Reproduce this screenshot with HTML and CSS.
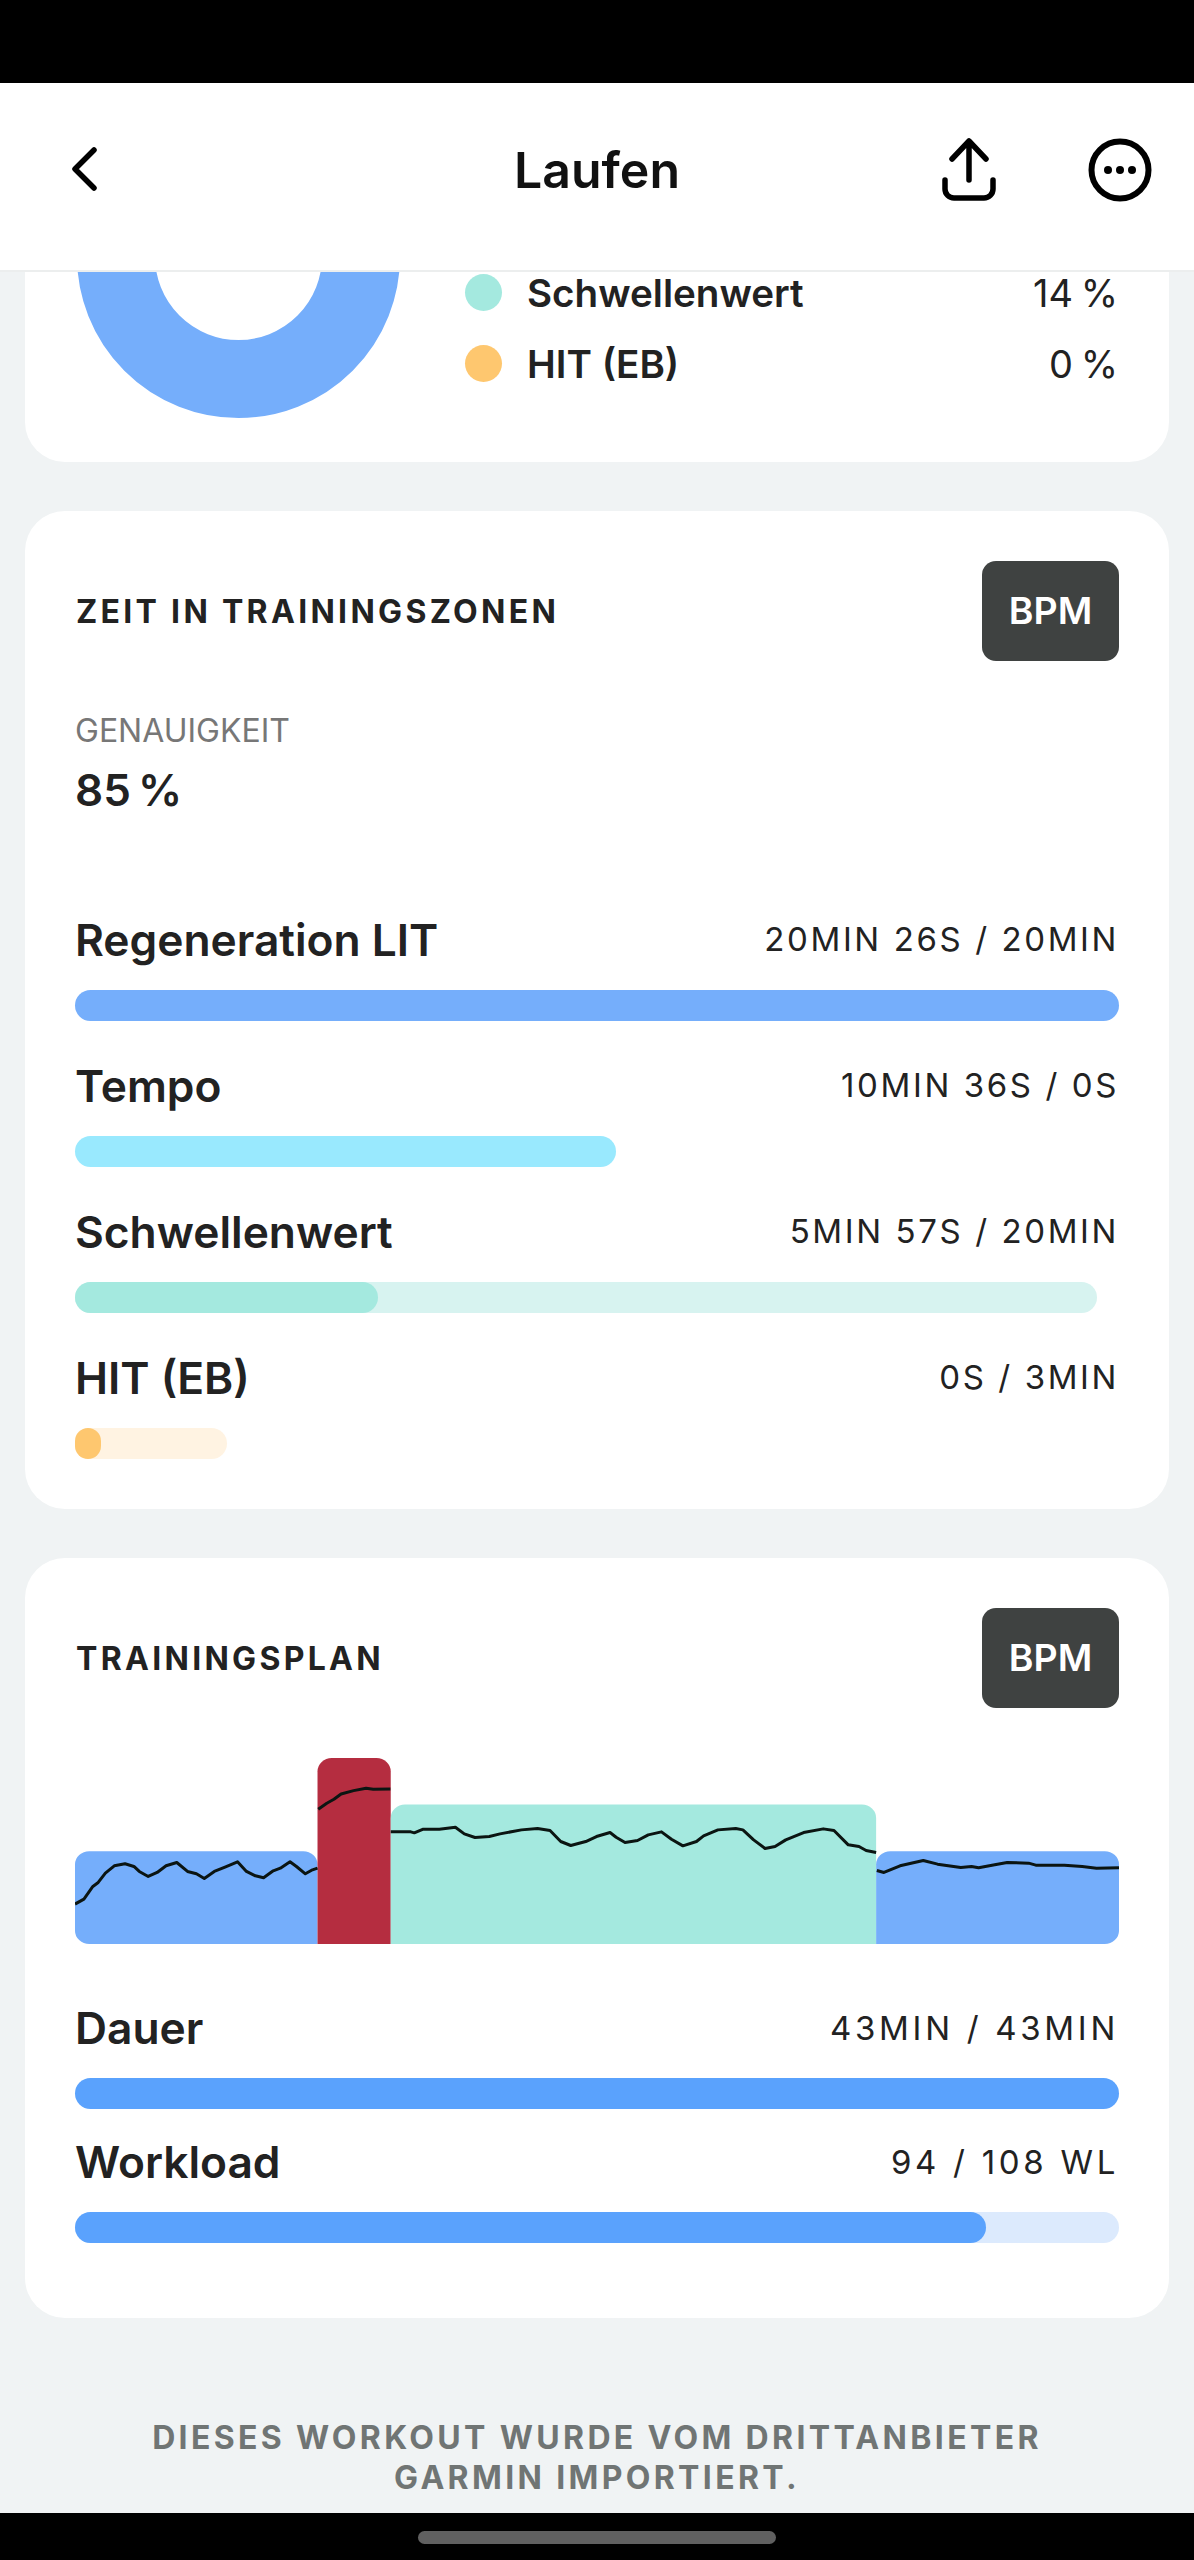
FILE: index.html
```html
<!DOCTYPE html>
<html lang="de">
<head>
    <meta charset="UTF-8">
    <title>Laufen</title>
    <meta name="viewport" content="width=device-width, initial-scale=1">
    <link rel="stylesheet" href="styles.css">
</head>
<body>

<div class="screen">
    <div class="status-bar"></div>

    <!-- Top bar -->
    <header class="top-bar">
        <div class="top-left">
            <svg class="icon-back" viewBox="0 0 30 50" width="30" height="50">
                <path d="M24 6 L5 25 L24 44"/>
            </svg>
        </div>
        <h1 class="top-title">Laufen</h1>
        <div class="top-right">
            <svg class="icon-share" viewBox="0 0 60 66" width="60" height="66">
                <path d="M12 22 L29 4 L46 22 M29 5 V43"/>
                <path d="M5 43 V52 A9 9 0 0 0 14 61 H44 A9 9 0 0 0 53 52 V43"/>
            </svg>
            <svg class="icon-more" viewBox="0 0 70 70" width="70" height="70">
                <circle class="ring" cx="35" cy="35" r="28.5"/>
                <circle class="dot" cx="23" cy="35" r="4"/>
                <circle class="dot" cx="35" cy="35" r="4"/>
                <circle class="dot" cx="47" cy="35" r="4"/>
            </svg>
        </div>
    </header>

    <main class="content">
        <!-- Share of zones -->
        <section class="card card-share">
            <div class="donut"></div>
            <div class="legend">
                <div class="legend-row">
                    <span class="legend-dot dot-green"></span>
                    <span class="legend-name">Schwellenwert</span>
                    <span class="legend-value">14 %</span>
                </div>
                <div class="legend-row">
                    <span class="legend-dot dot-orange"></span>
                    <span class="legend-name">HIT (EB)</span>
                    <span class="legend-value">0 %</span>
                </div>
            </div>
        </section>

        <!-- Time in zones -->
        <section class="card">
            <div class="card-head">
                <h2 class="card-title">ZEIT IN TRAININGSZONEN</h2>
                <div class="unit-btn">BPM</div>
            </div>

            <div class="stat">
                <div class="stat-label">GENAUIGKEIT</div>
                <div class="stat-value">85 %</div>
            </div>

            <div class="rows rows-zones">
                <div class="row">
                    <div class="row-head">
                        <span class="row-name">Regeneration LIT</span>
                        <span class="row-value">20MIN 26S / 20MIN</span>
                    </div>
                    <div class="track">
                        <div class="fill fill-blue" style="width: 100%"></div>
                    </div>
                </div>
                <div class="row">
                    <div class="row-head">
                        <span class="row-name">Tempo</span>
                        <span class="row-value">10MIN 36S / 0S</span>
                    </div>
                    <div class="track">
                        <div class="fill fill-sky" style="width: 51.8%"></div>
                    </div>
                </div>
                <div class="row">
                    <div class="row-head">
                        <span class="row-name">Schwellenwert</span>
                        <span class="row-value">5MIN 57S / 20MIN</span>
                    </div>
                    <div class="track track-green" style="width: 97.9%">
                        <div class="fill fill-green" style="width: 29.6%"></div>
                    </div>
                </div>
                <div class="row">
                    <div class="row-head">
                        <span class="row-name">HIT (EB)</span>
                        <span class="row-value">0S / 3MIN</span>
                    </div>
                    <div class="track track-orange" style="width: 14.6%">
                        <div class="fill fill-orange" style="width: 16.8%"></div>
                    </div>
                </div>
            </div>
        </section>

        <!-- Training plan -->
        <section class="card card-plan">
            <div class="card-head">
                <h2 class="card-title">TRAININGSPLAN</h2>
                <div class="unit-btn">BPM</div>
            </div>

            <svg class="plan-chart" viewBox="70 84 2923 559" width="1044" height="186" preserveAspectRatio="none">
                <path class="seg-blue" d="M70 404 A40 40 0 0 1 110 364 H709 A40 40 0 0 1 749 404 V643 H110 A40 40 0 0 1 70 603 Z"/>
                <path class="seg-red" d="M749 124 A40 40 0 0 1 789 84 H914 A40 40 0 0 1 954 124 V643 H749 Z"/>
                <path class="seg-green" d="M954 264 A40 40 0 0 1 994 224 H2273 A40 40 0 0 1 2313 264 V643 H954 Z"/>
                <path class="seg-blue" d="M2313 404 A40 40 0 0 1 2353 364 H2953 A40 40 0 0 1 2993 404 V603 A40 40 0 0 1 2953 643 H2313 Z"/>
                <polyline class="pulse" points="70,523 95,508 120,470 135,458 155,430 180,408 210,402 235,410 250,425 275,440 300,428 325,408 355,398 385,425 410,432 432,446 460,425 490,412 525,396 550,425 575,438 598,444 625,423 645,415 672,396 690,410 715,432 735,420 749,415"/>
                <polyline class="pulse" points="751,238 775,220 795,208 815,192 850,182 885,175 905,178 953,177"/>
                <polyline class="pulse" points="954,306 1010,306 1020,309 1045,298 1090,298 1135,292 1160,312 1190,323 1230,320 1260,312 1320,300 1365,296 1400,302 1430,335 1458,347 1500,335 1530,320 1568,308 1585,322 1610,338 1645,332 1675,315 1712,306 1740,328 1772,348 1810,335 1830,318 1870,300 1920,296 1940,300 1970,330 2002,356 2030,350 2060,330 2110,308 2165,297 2195,302 2235,345 2265,350 2285,362 2313,368"/>
                <polyline class="pulse" points="2315,422 2335,428 2380,408 2445,392 2485,403 2550,413 2580,410 2600,414 2645,405 2680,398 2740,400 2760,406 2840,406 2890,410 2930,415 2993,414"/>
            </svg>

            <div class="rows rows-plan">
                <div class="row">
                    <div class="row-head">
                        <span class="row-name">Dauer</span>
                        <span class="row-value">43MIN / 43MIN</span>
                    </div>
                    <div class="track">
                        <div class="fill fill-plan" style="width: 100%"></div>
                    </div>
                </div>
                <div class="row">
                    <div class="row-head">
                        <span class="row-name">Workload</span>
                        <span class="row-value">94 / 108 WL</span>
                    </div>
                    <div class="track track-plan">
                        <div class="fill fill-plan" style="width: 87.3%"></div>
                    </div>
                </div>
            </div>
        </section>

        <p class="import-note">DIESES WORKOUT WURDE VOM DRITTANBIETER<br>GARMIN IMPORTIERT.</p>
    </main>

    <div class="nav-bar">
        <div class="nav-pill"></div>
    </div>
</div>

</body>
</html>
```

FILE: styles.css
```css
/* Reset CSS */
* {
    box-sizing: border-box;
    margin: 0;
    padding: 0;
}

body {
    font-family: Inter, 'Liberation Sans', sans-serif;
    background: #f0f3f4;
    color: #222;
}

.screen {
    display: flex;
    flex-direction: column;
    width: 1194px;
    height: 2560px;
    overflow: hidden;
}

.status-bar {
    position: relative;
    z-index: 2;
    flex: none;
    height: 83px;
    background: #000;
}

/* Top bar stays above the scrolled content */
.top-bar {
    position: relative;
    z-index: 2;
    flex: none;
    display: grid;
    grid-template-columns: 1fr auto 1fr;
    align-items: center;
    height: 189px;
    padding: 0 39px 13px;
    background: #fff;
    border-bottom: 2px solid #eceeee;
}

.top-left {
    padding: 2px 0 0 31px;
}

.top-title {
    font-size: 50px;
    font-weight: 600;
    line-height: 60px;
    color: #111;
}

.top-right {
    display: flex;
    justify-content: flex-end;
    align-items: center;
    gap: 85px;
}

.icon-back path,
.icon-share path,
.icon-more .ring {
    fill: none;
    stroke: #000;
    stroke-linecap: round;
    stroke-linejoin: round;
}

.icon-back path {
    stroke-width: 5.5;
}

.icon-share path {
    stroke-width: 5.5;
}

.icon-more .ring {
    stroke-width: 6;
}

.icon-more .dot {
    fill: #000;
}

/* Content */
.content {
    flex: 1;
    padding: 0 25px;
}

.card {
    background: #fff;
    border-radius: 40px;
    padding: 50px;
    margin-bottom: 49px;
}

.card-share {
    display: flex;
    margin-top: -207px;
    padding: 30px 51px 44px 52px;
}

.donut {
    flex: none;
    width: 323px;
    height: 323px;
    border: 78px solid #75aefb;
    border-radius: 50%;
}

.legend {
    flex: 1;
    align-self: flex-end;
    margin: 0 0 19px 65px;
}

.legend-row {
    display: flex;
    align-items: center;
    height: 71px;
}

.legend-dot {
    flex: none;
    width: 37px;
    height: 37px;
    border-radius: 50%;
    margin-right: 25px;
}

.dot-green {
    background: #a4e9df;
}

.dot-orange {
    background: #fec76f;
}

.legend-name {
    flex: 1;
    font-size: 38.6px;
    font-weight: 600;
    line-height: 38px;
}

.legend-value {
    font-size: 38px;
    line-height: 38px;
    word-spacing: -3px;
}

.card-head {
    display: flex;
    justify-content: space-between;
    align-items: center;
}

.card-title {
    font-size: 32px;
    font-weight: 700;
    letter-spacing: 3.3px;
    margin-left: 1px;
}

.unit-btn {
    width: 137px;
    height: 100px;
    line-height: 100px;
    text-align: center;
    background: #3f4241;
    border-radius: 14px;
    color: #fff;
    font-size: 37.5px;
    font-weight: 600;
}

.stat {
    margin-top: 50px;
}

.stat-label {
    font-size: 32px;
    line-height: 40px;
    color: #777;
}

.stat-value {
    margin-top: 13px;
    font-size: 44px;
    font-weight: 600;
    line-height: 52px;
    word-spacing: -4px;
}

.rows {
    display: flex;
    flex-direction: column;
    gap: 38px;
}

.rows-zones {
    margin-top: 97px;
}

.rows-plan {
    gap: 26px;
    margin-top: 57px;
}

.row-head {
    display: flex;
    justify-content: space-between;
    align-items: center;
    height: 54px;
    margin-bottom: 23px;
}

.row-name {
    font-size: 44.3px;
    font-weight: 600;
}

.row-value {
    font-size: 33px;
    letter-spacing: 2.6px;
}

.rows-zones .row-value {
    padding-bottom: 3px;
}

.rows-plan .row-value {
    letter-spacing: 3.7px;
}

.track {
    height: 31px;
    border-radius: 16px;
}

.fill {
    height: 100%;
    border-radius: 16px;
}

.fill-blue {
    background: #75aefb;
}

.fill-sky {
    background: #99e9fe;
}

.fill-green {
    background: #a4e9df;
}

.fill-orange {
    background: #fec76f;
}

.fill-plan {
    background: #5aa2fd;
}

.track-green {
    background: #d7f3f0;
}

.track-orange {
    background: #fff3e2;
}

.track-plan {
    background: #dceafd;
}

/* Training plan */
.card-plan {
    padding-bottom: 75px;
    margin-bottom: 0;
}

.plan-chart {
    display: block;
    margin-top: 50px;
}

.seg-blue {
    fill: #75aefb;
}

.seg-red {
    fill: #b52d40;
}

.seg-green {
    fill: #a4e9df;
}

.pulse {
    fill: none;
    stroke: #0b1512;
    stroke-width: 3px;
    stroke-linejoin: round;
    vector-effect: non-scaling-stroke;
}

.import-note {
    margin-top: 100px;
    font-size: 32px;
    font-weight: 700;
    line-height: 40px;
    letter-spacing: 3.35px;
    text-align: center;
    color: #707574;
}

.nav-bar {
    flex: none;
    display: flex;
    justify-content: center;
    height: 47px;
    padding-top: 18px;
    background: #000;
}

.nav-pill {
    width: 358px;
    height: 13px;
    border-radius: 7px;
    background: #606060;
}
```
